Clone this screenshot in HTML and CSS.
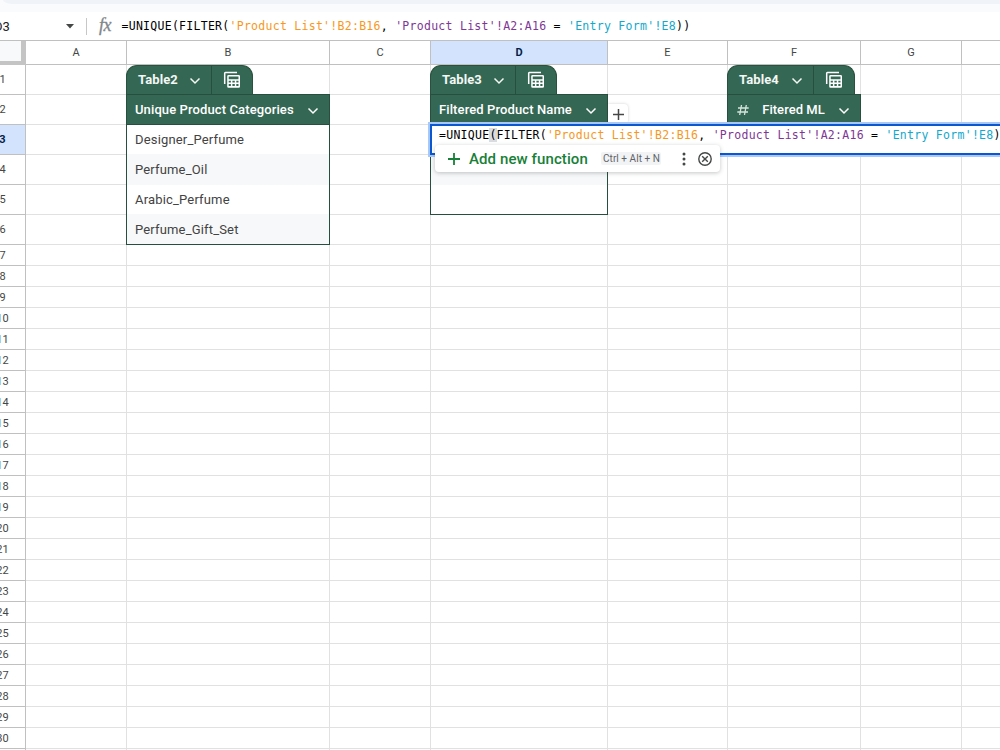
FILE: index.html
```html
<!DOCTYPE html>
<html lang="en">
<head>
<meta charset="utf-8">
<title>Spreadsheet</title>
<link rel="stylesheet" href="styles.css">
</head>
<body>
<svg class="defs" width="0" height="0">
  <symbol id="chevron" viewBox="0 0 12 12"><path d="M1.500 3.500 6 8l4.500-4.500" fill="none" stroke="currentColor" stroke-width="1.500"/></symbol>
  <symbol id="calc" viewBox="0 0 18 18"><path d="M1.700 13V2.200q0-.7.7-.7H14" fill="none" stroke="currentColor" stroke-width="1.500"/><path fill="currentColor" fill-rule="evenodd" d="M5.500 4h10.200q1.300 0 1.300 1.300v10.200q0 1.300-1.300 1.300H5.500q-1.300 0-1.300-1.300V5.300Q4.200 4 5.500 4zm.2 1.500v2.700h9.800V5.500zm0 4.200v1.900h2.200V9.700zm3.700 0v1.900h2.400V9.700zm3.900 0v1.900h2.200V9.700zm-7.600 3.400v2h2.200v-2zm3.700 0v2h2.400v-2zm3.900 0v2h2.200v-2z"/></symbol>
</svg>
<div class="app">
  <div class="toolbar"><div class="toolbar-pill"></div></div>
  <div class="formula-bar">
    <div class="name-box">D3</div>
    <svg class="caret" width="8" height="5" viewBox="0 0 8 5"><path d="M0 0h8L4 4.500z" fill="#444746"/></svg>
    <div class="divider"></div>
    <div class="fx">fx</div>
    <div class="code">=UNIQUE(FILTER(<span class="c-orange">'Product List'!B2:B16</span>, <span class="c-purple">'Product List'!A2:A16</span> = <span class="c-cyan">'Entry Form'!E8</span>))</div>
  </div>
  <div class="sheet" id="sheet">
    <section class="data-table at-b">
      <div class="tab"><div class="tab-name">Table2<svg class="chev"><use href="#chevron"/></svg></div><div class="tab-view"><svg class="calc"><use href="#calc"/></svg></div></div>
      <div class="head">Unique Product Categories<svg class="chev"><use href="#chevron"/></svg></div>
      <div class="body">
        <div class="item">Designer_Perfume</div>
        <div class="item">Perfume_Oil</div>
        <div class="item">Arabic_Perfume</div>
        <div class="item">Perfume_Gift_Set</div>
      </div>
    </section>
    <section class="data-table at-d">
      <div class="tab"><div class="tab-name">Table3<svg class="chev"><use href="#chevron"/></svg></div><div class="tab-view"><svg class="calc"><use href="#calc"/></svg></div></div>
      <div class="head">Filtered Product Name<svg class="chev"><use href="#chevron"/></svg></div>
      <div class="body">
        <div class="item"></div>
        <div class="item"></div>
        <div class="item"></div>
      </div>
    </section>
    <section class="data-table at-f">
      <div class="tab"><div class="tab-name">Table4<svg class="chev"><use href="#chevron"/></svg></div><div class="tab-view"><svg class="calc"><use href="#calc"/></svg></div></div>
      <div class="head"><svg class="hash" width="12" height="12" viewBox="0 0 12 12"><path d="M4.500 1 2.700 11M9.300 1 7.500 11M1 4h10.700M.3 8H11" fill="none" stroke="#d5e4dc" stroke-width="1.300"/></svg>Fitered ML<svg class="chev"><use href="#chevron"/></svg></div>
    </section>
    <div class="add-column"><svg width="11" height="11" viewBox="0 0 11 11"><path d="M5.500 0v11M0 5.500h11" stroke="#444746" stroke-width="1.500"/></svg></div>
    <div class="editor">
      <div class="code">=UNIQUE<span class="paren">(</span>FILTER(<span class="c-orange">'Product List'!B2:B16</span>, <span class="c-purple">'Product List'!A2:A16</span> = <span class="c-cyan">'Entry Form'!E8</span>)<span class="code-end">)</span></div>
      <div class="hint">
        <svg width="12" height="12" viewBox="0 0 12 12"><path d="M6 0v12M0 6h12" stroke="#188038" stroke-width="1.800"/></svg>
        <span class="hint-text">Add new function</span>
        <span class="keys">Ctrl + Alt + N</span>
        <svg class="dots" width="4" height="14" viewBox="0 0 4 14"><g fill="#444746"><circle cx="2" cy="2" r="1.500"/><circle cx="2" cy="7" r="1.500"/><circle cx="2" cy="12" r="1.500"/></g></svg>
        <svg width="14" height="14" viewBox="0 0 14 14"><g fill="none" stroke="#444746" stroke-width="1.400"><circle cx="7" cy="7" r="6.200"/><path d="m4.200 4.200 5.600 5.600m0-5.600L4.200 9.800"/></g></svg>
      </div>
    </div>
  </div>
</div>
<script src="grid.js"></script>
</body>
</html>
```
FILE: styles.css
```css
* { box-sizing: border-box; }
body { margin: 0; font-family: Roboto, sans-serif; background: #fff; overflow: hidden; }
.defs { position: absolute; }
.app { width: 1000px; height: 750px; overflow: hidden; display: flex; flex-direction: column; }
.toolbar { flex: none; height: 12px; background: #f9fbfd; padding-left: 3px; }
.toolbar-pill { height: 4px; background: #f0f4f9; border-bottom-left-radius: 10px 4px; }
.formula-bar { flex: none; height: 28px; display: flex; align-items: center; background: #fff; }
.name-box { width: 66px; font-size: 13px; color: #202124; text-indent: -6px; }
.caret { flex: none; }
.divider { width: 1px; height: 17px; background: #c7c7c7; margin: 0 12px; }
.fx { width: 22.500px; font: italic 18px "Liberation Serif", serif; color: #80868b; letter-spacing: -.5px; padding-bottom: 1px; -webkit-text-stroke: .3px #80868b; }
.code { font: 11.500px/16px "DejaVu Sans Mono", monospace; letter-spacing: .277px; white-space: pre; color: #000; }
.c-orange { color: #f7981d; }
.c-purple { color: #7e3794; }
.c-cyan { color: #11a9cc; }

.sheet {
  flex: none; display: grid; border-top: 1px solid #c0c0c0; overflow: hidden; width: 1000px;
  grid-template-columns: 26px 101px 203px 101px 177px 120px 133px 101px 39px;
  grid-template-rows: 24px repeat(6, 30px) repeat(25, 21px);
}
.cell { border-right: 1px solid #e1e1e1; border-bottom: 1px solid #e1e1e1; }
.col-head, .row-head { display: flex; align-items: center; justify-content: center; font-size: 11px; color: #444746; border-right: 1px solid #c0c0c0; border-bottom: 1px solid #c0c0c0; background: #fff; }
.row-head { justify-content: flex-end; }
.row-head span { width: 45px; flex: none; text-align: center; }
.active { background: #d3e3fd; color: #041e49; font-weight: 700; }
.corner { grid-area: 1 / 1; background: #f8f9fa; border-right: 5px solid #c4c4c4; border-bottom: 4px solid #c4c4c4; }

.data-table { z-index: 1; margin-left: -1px; display: flex; flex-direction: column; }
.at-b { grid-area: 2 / 3 / 8 / 4; }
.at-d { grid-area: 2 / 5 / 7 / 6; }
.at-f { grid-area: 2 / 7 / 4 / 8; }
.tab { flex: none; height: 29px; width: 127px; display: flex; background: #356854; color: #fff; border-radius: 11px 11px 0 0; border: 1px solid #28513f; border-bottom: 0; }
.at-f .tab { width: 128px; }
.tab-name { flex: none; width: 84px; padding: 0 0 2px 11px; display: flex; align-items: center; gap: 11px; font-size: 13px; font-weight: 700; letter-spacing: .1px; color: #f3f7f5; }
.at-f .tab-name { width: 85px; gap: 12px; }
.tab-view { flex: 1; border-left: 1px solid #284e3f; display: flex; align-items: center; justify-content: center; }
.chev { width: 12px; height: 12px; flex: none; margin-top: 2px; }
.tab-name .chev { margin-top: 3px; }
.calc { width: 18px; height: 18px; }
.head { flex: none; height: 31px; display: flex; align-items: center; justify-content: space-between; padding: 0 10px 0 8px; background: #356854; border: 1px solid #284e3f; color: #fff; font-size: 13px; font-weight: 500; letter-spacing: .11px; white-space: nowrap; }
.hash { margin-left: 1px; }
.at-f .head { letter-spacing: .05px; }
.body { flex: none; border: 1px solid #284e3f; border-top: 0; background: #fff; }
.item { height: 30px; padding-left: 8px; line-height: 29px; font-size: 13px; color: #434343; letter-spacing: .17px; }
.item:nth-child(even) { background: #f6f8f9; margin-top: -1px; height: 31px; line-height: 31px; }
.item:last-child { height: 29px; }
.item:last-child:nth-child(even) { height: 30px; }
.add-column { grid-area: 3 / 6; z-index: 1; margin-top: 9px; width: 20px; height: 20px; background: #fff; border-radius: 0 4px 4px 0; box-shadow: 0 0 3px rgba(60,64,67,.25); display: flex; align-items: center; justify-content: center; }
.editor { grid-area: 4 / 5 / 5 / 10; z-index: 2; position: relative; margin: -1px -10px 0 -1px; border: 2px solid #0b57d0; outline: 2px solid #a8c7fa; background: #fff; padding: 1px 0 0 7px; }
.paren { background: #dadce0; }
.hint { position: absolute; left: 3px; top: 19px; width: 285px; height: 27px; display: flex; align-items: center; padding: 0 8px 0 13px; background: #fff; border-radius: 4px; box-shadow: 0 1px 4px rgba(60,64,67,.3); white-space: nowrap; }
.hint-text { width: 119px; margin-left: 9px; color: #188038; font-size: 15px; font-weight: 500; letter-spacing: .1px; }
.keys { margin-left: 13px; padding: 0 2px; width: 60px; height: 13px; font-size: 10px; line-height: 13px; letter-spacing: .05px; color: #5f6368; background: #f1f3f4; border-radius: 2px; }
.dots { margin-left: auto; margin-right: 12px; }
```
FILE: grid.js
```js
const sheet = document.getElementById('sheet');
function add(cls, row, col, text) {
  const el = document.createElement('div');
  el.className = cls;
  el.style.gridArea = row + ' / ' + col;
  if (text) {
    const label = document.createElement('span');
    label.textContent = text;
    el.appendChild(label);
  }
  sheet.appendChild(el);
}
add('corner', 1, 1);
['A', 'B', 'C', 'D', 'E', 'F', 'G', ''].forEach((name, i) => {
  add('col-head' + (name === 'D' ? ' active' : ''), 1, i + 2, name);
});
for (let r = 1; r <= 31; r++) {
  add('row-head' + (r === 3 ? ' active' : ''), r + 1, 1, r < 31 ? String(r) : '');
  for (let c = 2; c <= 9; c++) add('cell', r + 1, c);
}
```
